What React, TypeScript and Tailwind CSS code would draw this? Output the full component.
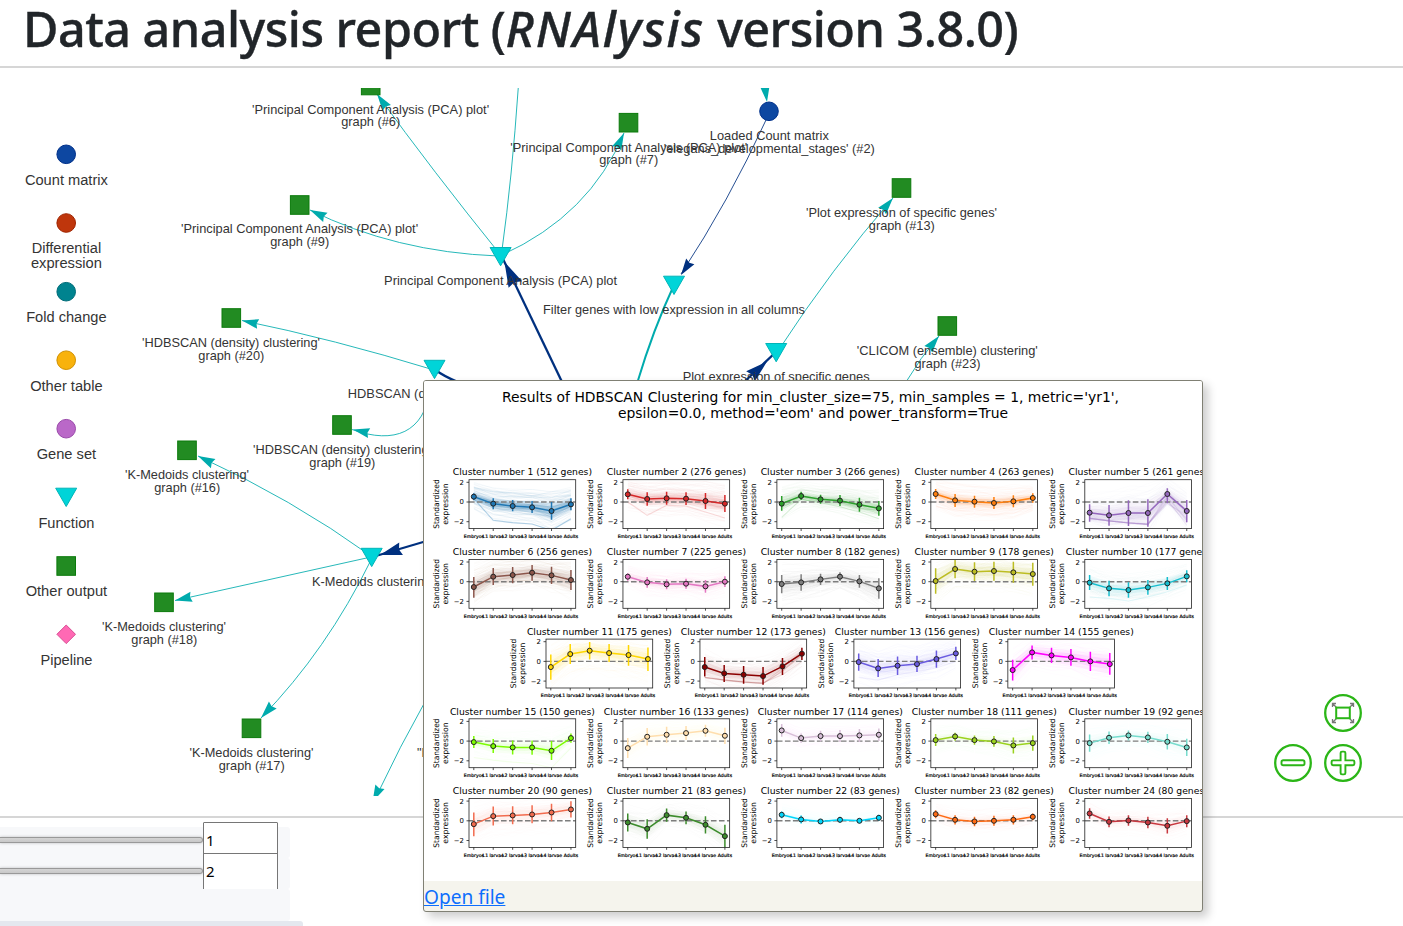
import React from 'react';

const TEAL = '#00abad';
const NAVY = '#00307f';

type Point = [number, number];

const edges: { d: string; color: string; w: number }[] = [
  { d: 'M500.6 255 Q432 170 377 94', color: TEAL, w: 1 },
  { d: 'M502 250 Q512 178 518.4 86', color: TEAL, w: 1 },
  { d: 'M498 256 Q395 252 310 210', color: TEAL, w: 1 },
  { d: 'M502 255 Q590 215 624 133', color: TEAL, w: 1 },
  { d: 'M766 120 Q729 201 681 274', color: NAVY, w: 1 },
  { d: 'M674 285 Q653 330 637.5 382', color: TEAL, w: 2 },
  { d: 'M503 259 L563 384', color: NAVY, w: 2.3 },
  { d: 'M778 351 Q832 268 893 198', color: TEAL, w: 1 },
  { d: 'M776 352 L742 384', color: NAVY, w: 2.3 },
  { d: 'M906 382 Q920 358 939 336', color: TEAL, w: 1 },
  { d: 'M434 370 Q333 339 242 320.5', color: TEAL, w: 1 },
  { d: 'M430 390 C424 432 395 445 352 429.5', color: TEAL, w: 1 },
  { d: 'M371 556 Q292 499 198 456', color: TEAL, w: 1 },
  { d: 'M371 557 L175 600.5', color: TEAL, w: 1 },
  { d: 'M371 560 Q327 650 261 718', color: TEAL, w: 1 },
  { d: 'M426 700 Q400 746 376 797', color: TEAL, w: 1 },
  { d: 'M430 540 L374 556.5', color: NAVY, w: 2.3 },
  { d: 'M434 369 Q445 377 458 382', color: NAVY, w: 2.3 },
];

const arrows: { tip: Point; from: Point; len: number; color: string }[] = [
  { tip: [377, 94], from: [400, 126.7], len: 17, color: TEAL },
  { tip: [310, 210], from: [350, 229], len: 17, color: TEAL },
  { tip: [624, 133], from: [614, 154], len: 17, color: TEAL },
  { tip: [681, 275], from: [698, 250], len: 16.5, color: NAVY },
  { tip: [767, 102], from: [764, 80], len: 17, color: TEAL },
  { tip: [504.5, 262], from: [518, 290], len: 25, color: NAVY },
  { tip: [893, 198], from: [868, 228], len: 17, color: TEAL },
  { tip: [767, 361.5], from: [744, 382], len: 22, color: NAVY },
  { tip: [939, 336], from: [922, 357], len: 17, color: TEAL },
  { tip: [242, 320.5], from: [300, 333], len: 16.5, color: TEAL },
  { tip: [353, 429.5], from: [375, 434.5], len: 16.5, color: TEAL },
  { tip: [198, 456], from: [246, 480], len: 17, color: TEAL },
  { tip: [175, 600.5], from: [230, 588], len: 17, color: TEAL },
  { tip: [261, 718], from: [282, 695], len: 17.5, color: TEAL },
  { tip: [372.5, 802], from: [393, 760], len: 17, color: TEAL },
  { tip: [380, 555], from: [424, 542], len: 22, color: NAVY },
];

const squares: Point[] = [
  [370.7, 85.5], [299.7, 205], [628.5, 122.7], [901.5, 188], [947.3, 326],
  [231.3, 318], [342, 425], [187, 450.3], [164, 602.3], [251.5, 728.3], [66.2, 566],
];

const triangles: Point[] = [
  [500.6, 247.5], [674, 276.2], [776.2, 343.5], [434.5, 360.3], [371.7, 548.3], [66.2, 488.2],
];

const circles: { x: number; y: number; fill: string; stroke: string }[] = [
  { x: 769, y: 111.3, fill: '#0d47a1', stroke: '#00308a' },
  { x: 66.2, y: 154.3, fill: '#0d47a1', stroke: '#00308a' },
  { x: 66.2, y: 223, fill: '#bf360c', stroke: '#a02400' },
  { x: 66.2, y: 291.7, fill: '#00838f', stroke: '#006c78' },
  { x: 66.2, y: 360.2, fill: '#f8b20c', stroke: '#d09000' },
  { x: 66.2, y: 428.7, fill: '#ba68c8', stroke: '#9a4aaa' },
];

const labels: { t: string; x: number; y: number; w?: number }[] = [
  { t: "'Principal Component Analysis (PCA) plot'", x: 370.6, y: 114, w: 237 },
  { t: 'graph (#6)', x: 370.7, y: 126, w: 59 },
  { t: "'Principal Component Analysis (PCA) plot'", x: 299.6, y: 233, w: 237 },
  { t: 'graph (#9)', x: 299.7, y: 246, w: 59 },
  { t: "'Principal Component Analysis (PCA) plot'", x: 628.8, y: 152, w: 237 },
  { t: 'graph (#7)', x: 628.7, y: 164, w: 59 },
  { t: 'Loaded Count matrix', x: 769.3, y: 140, w: 119 },
  { t: "'elegans_developmental_stages' (#2)", x: 769.3, y: 153, w: 211 },
  { t: "'Plot expression of specific genes'", x: 901.5, y: 217, w: 191 },
  { t: 'graph (#13)', x: 901.8, y: 230, w: 66 },
  { t: "'CLICOM (ensemble) clustering'", x: 947.3, y: 355, w: 181 },
  { t: 'graph (#23)', x: 947.5, y: 368, w: 66 },
  { t: "'HDBSCAN (density) clustering'", x: 231, y: 347, w: 178 },
  { t: 'graph (#20)', x: 231.3, y: 360, w: 66 },
  { t: "'HDBSCAN (density) clustering'", x: 342, y: 454, w: 178 },
  { t: 'graph (#19)', x: 342.3, y: 467, w: 66 },
  { t: "'K-Medoids clustering'", x: 187, y: 479, w: 124 },
  { t: 'graph (#16)', x: 187.2, y: 492, w: 66 },
  { t: "'K-Medoids clustering'", x: 164, y: 631, w: 124 },
  { t: 'graph (#18)', x: 164.3, y: 644, w: 66 },
  { t: "'K-Medoids clustering'", x: 251.5, y: 757, w: 124 },
  { t: 'graph (#17)', x: 251.7, y: 770, w: 66 },
  { t: 'Principal Component Analysis (PCA) plot', x: 500.6, y: 285, w: 233 },
  { t: 'Filter genes with low expression in all columns', x: 674, y: 314, w: 262 },
  { t: 'Plot expression of specific genes', x: 776.2, y: 381, w: 187 },
  { t: 'HDBSCAN (density) clustering', x: 434.8, y: 398, w: 174 },
  { t: 'K-Medoids clustering', x: 371.7, y: 586, w: 119.5 },
  { t: '"Pipeline', x: 442, y: 757, w: 50 },
];

const legend: { t: string; y: number; w: number }[] = [
  { t: 'Count matrix', y: 185, w: 83 },
  { t: 'Differential', y: 253.3, w: 69.5 },
  { t: 'expression', y: 268.3, w: 71 },
  { t: 'Fold change', y: 322, w: 80.5 },
  { t: 'Other table', y: 391, w: 72.5 },
  { t: 'Gene set', y: 459, w: 59.5 },
  { t: 'Function', y: 528, w: 56 },
  { t: 'Other output', y: 596, w: 81.5 },
  { t: 'Pipeline', y: 665, w: 52 },
];

function Arrow({ tip, from, len, color }: { tip: Point; from: Point; len: number; color: string }) {
  const a = Math.atan2(tip[1] - from[1], tip[0] - from[0]);
  const at = (u: number, v: number) =>
    `${tip[0] + len * (u * Math.cos(a) - v * Math.sin(a))},${tip[1] + len * (u * Math.sin(a) + v * Math.cos(a))}`;
  return <polygon points={[at(0, 0), at(-1, 0.3), at(-0.9, 0), at(-1, -0.3)].join(' ')} fill={color} />;
}

function Graph() {
  return (
    <svg viewBox="0 88 1403 708" className="block h-[708px] w-[1403px]">
      {edges.map((e, i) => (
        <path key={i} d={e.d} stroke={e.color} strokeWidth={e.w} opacity={e.w === 1 ? 0.85 : 1} fill="none" />
      ))}
      {arrows.map((a, i) => (
        <Arrow key={i} {...a} />
      ))}
      {squares.map(([x, y], i) => (
        <rect key={i} x={x - 9.3} y={y - 9.3} width="18.6" height="18.6" fill="#228b22" stroke="#0a7a0a" />
      ))}
      {triangles.map(([x, y], i) => (
        <polygon key={i} points={`${x - 10.5},${y} ${x + 10.5},${y} ${x},${y + 18.3}`} fill="#00d4d8" stroke="#00b4b8" />
      ))}
      {circles.map((c, i) => (
        <circle key={i} cx={c.x} cy={c.y} r="9.3" fill={c.fill} stroke={c.stroke} />
      ))}
      <polygon points="66.2,625 75.5,634.3 66.2,643.6 56.9,634.3" fill="#ff69b4" stroke="#d84a92" />
      <g fill="#343434" textAnchor="middle" className="font-['Liberation_Sans',Arial,sans-serif] text-[12.8px]">
        {labels.map((l, i) => (
          <text key={i} x={l.x} y={l.y} textLength={l.w} lengthAdjust="spacingAndGlyphs">{l.t}</text>
        ))}
      </g>
      <g fill="#343434" textAnchor="middle" className="font-['Liberation_Sans',Arial,sans-serif] text-[14.7px]">
        {legend.map((l) => (
          <text key={l.t} x="66.4" y={l.y} textLength={l.w} lengthAdjust="spacingAndGlyphs">{l.t}</text>
        ))}
      </g>
    </svg>
  );
}

/* Each sample is [mean, upper end, lower end], in thirds of a pixel below the zero line. */
type Sample = [number, number, number];
interface Cluster {
  n: number;
  genes: number;
  color: string;
  ghost: number;
  s: Sample[];
  extra?: number[][];
}

const clusters: Cluster[] = [
  { n: 1, genes: 512, color: '#1f77b4', ghost: 2.4, s: [[-16, -26, -5], [5, -11, 22], [12, -6, 28], [16, -3, 33], [27, 0, 53], [7, -11, 25]], extra: [[-10, 55, 62, 66, 85, 50]] },
  { n: 2, genes: 276, color: '#d62728', ghost: 1.2, s: [[-23, -38, -8], [-9, -29, 11], [-11, -31, 8], [-10, -29, 9], [-3, -27, 21], [5, -21, 30]], extra: [[0, 40, 10, 12, 30, 48]] },
  { n: 3, genes: 266, color: '#2ca02c', ghost: 1.3, s: [[5, -18, 26], [-18, -31, -6], [-8, -22, 5], [-4, -21, 12], [8, -13, 29], [19, -3, 41]], extra: [[46, -8, 2, 14, 30, 50]] },
  { n: 4, genes: 263, color: '#ff7f0e', ghost: 1.2, s: [[-24, -39, -9], [-5, -24, 15], [-1, -19, 17], [3, -15, 21], [-2, -20, 16], [-12, -26, 2]] },
  { n: 5, genes: 261, color: '#9467bd', ghost: 1, s: [[32, 7, 59], [40, 9, 71], [33, -5, 72], [33, -8, 74], [-24, -41, 4], [27, -6, 61]], extra: [[48, 56, 62, 66, 5, 40], [49, 57, 63, 67, -12, 56], [49, 57, 63, 67, -2, 62], [48, 56, 62, 66, -20, 30], [49, 57, 63, 67, -8, 70], [49, 57, 63, 67, 0, 48], [49, 57, 63, 67, -15, 52]] },
  { n: 6, genes: 256, color: '#8c564b', ghost: 1.3, s: [[16, -14, 48], [-15, -41, 10], [-20, -44, 5], [-27, -50, -3], [-19, -45, 7], [-5, -35, 25]] },
  { n: 7, genes: 225, color: '#e377c2', ghost: 0.8, s: [[-15, -25, -3], [2, -14, 18], [8, -7, 23], [6, -9, 21], [14, -5, 33], [0, -16, 16]] },
  { n: 8, genes: 182, color: '#7f7f7f', ghost: 0.8, s: [[7, -20, 35], [2, -22, 27], [-7, -24, 10], [-15, -28, -2], [-1, -20, 18], [20, -10, 51]] },
  { n: 9, genes: 178, color: '#bcbd22', ghost: 1, s: [[-2, -40, 36], [-38, -65, -10], [-30, -58, -2], [-32, -60, -3], [-28, -60, 3], [-23, -57, 12]] },
  { n: 10, genes: 177, color: '#17becf', ghost: 0.9, s: [[3, -20, 25], [20, -3, 44], [25, 2, 48], [17, -5, 39], [5, -14, 25], [-16, -34, 2]], extra: [[46, 50, 58, 46, 30, 10]] },
  { n: 11, genes: 175, color: '#ffd700', ghost: 1, s: [[17, -21, 55], [-22, -52, 8], [-32, -58, -6], [-25, -52, 2], [-19, -49, 13], [-7, -42, 29]] },
  { n: 12, genes: 173, color: '#8b0000', ghost: 0.8, s: [[17, -13, 45], [36, 11, 62], [40, 14, 67], [44, 17, 70], [15, -10, 41], [-23, -41, -4]], extra: [[48, 56, 62, 66, 30, -20], [48, 56, 62, 66, 20, -30], [48, 55, 61, 64, 40, 0], [49, 57, 63, 67, 28, -24]] },
  { n: 13, genes: 156, color: '#6a5be0', ghost: 0.7, s: [[2, -24, 28], [21, -7, 47], [13, -15, 41], [8, -17, 32], [-7, -33, 19], [-24, -44, -4]], extra: [[48, 56, 40, 30, 20, 0]] },
  { n: 14, genes: 155, color: '#ff00ff', ghost: 0.9, s: [[26, -5, 57], [-27, -48, -6], [-18, -41, 5], [-12, -37, 13], [0, -29, 29], [8, -25, 40]] },
  { n: 15, genes: 150, color: '#7cfc00', ghost: 0.6, s: [[3, -15, 21], [15, -6, 36], [19, -2, 40], [19, -2, 41], [29, 0, 57], [-9, -23, 5]], extra: [[49, 57, 63, 67, 80, 20]] },
  { n: 16, genes: 133, color: '#ffdead', ghost: 0.5, s: [[21, -9, 51], [-13, -39, 13], [-19, -43, 5], [-24, -45, -3], [-31, -49, -13], [-16, -40, 9]] },
  { n: 17, genes: 114, color: '#d8bfd8', ghost: 0.5, s: [[-32, -51, -13], [-9, -23, 5], [-15, -31, 1], [-15, -33, 3], [-17, -36, 3], [-19, -38, 0]] },
  { n: 18, genes: 111, color: '#9ad21e', ghost: 0.5, s: [[-3, -21, 15], [-14, -25, -1], [-3, -17, 11], [1, -15, 17], [13, -11, 37], [6, -17, 29]] },
  { n: 19, genes: 92, color: '#76dccd', ghost: 0.5, s: [[6, -20, 32], [-10, -29, 9], [-17, -32, -2], [-11, -28, 6], [2, -21, 25], [19, -7, 45]] },
  { n: 20, genes: 90, color: '#f26b4e', ghost: 0.5, s: [[10, -25, 46], [-14, -43, 14], [-16, -44, 10], [-19, -47, 7], [-25, -51, 1], [-34, -59, -10]] },
  { n: 21, genes: 83, color: '#3c8c2c', ghost: 0.5, s: [[5, -22, 32], [24, -5, 54], [-17, -37, 3], [-9, -28, 10], [12, -14, 38], [46, 12, 80]] },
  { n: 22, genes: 83, color: '#00d5fb', ghost: 0.4, s: [[-18, -28, -8], [-4, -16, 8], [2, -4, 8], [-3, -12, 6], [0, -7, 7], [-9, -18, 0]] },
  { n: 23, genes: 82, color: '#ff6a13', ghost: 0.4, s: [[-20, -32, -8], [-3, -17, 11], [2, -12, 16], [0, -15, 15], [-3, -17, 11], [-12, -22, -2]] },
  { n: 24, genes: 80, color: '#c8373f', ghost: 0.4, s: [[-22, -38, -6], [3, -13, 19], [-1, -17, 15], [5, -12, 22], [15, -8, 38], [1, -17, 19]] },
];

const stages = ['Embryos', 'L1 larvae', 'L2 larvae', 'L3 larvae', 'L4 larvae', 'Adults'];
const ROW_STARTS = [0, 5, 10, 14, 19];
const PITCH = 19.43;
const px = (i: number) => 4.8 + i * PITCH;

function random(seed: number) {
  let v = seed * 9301 + 49297;
  return () => {
    v = (v * 16807) % 2147483647;
    return v / 2147483647;
  };
}

function ghostLines(c: Cluster) {
  const rnd = random(c.n);
  return Array.from({ length: 90 }, () => {
    const shift = rnd() + rnd() - 1;
    return c.s
      .map(([m, hi, lo], i) => {
        const half = (lo - hi) / 2 + 12;
        return `${px(i)},${22.3 + (m + half * (shift * 1.7 + (rnd() - 0.5) * 0.6)) / 3}`;
      })
      .join(' ');
  });
}

function ClusterPlot({ c, x, y }: { c: Cluster; x: number; y: number }) {
  const line = c.s.map(([m], i) => `${px(i)},${22.3 + m / 3}`).join(' ');
  const band = (k: number) => [
    ...c.s.map(([m, hi], i) => `${px(i)},${22.3 + (m + (hi - m) * k) / 3}`),
    ...c.s.map(([m, , lo], i) => `${px(i)},${22.3 + (m + (lo - m) * k) / 3}`).reverse(),
  ].join(' ');
  const wide = c.n >= 10 && c.genes >= 100;
  return (
    <g transform={`translate(${x} ${y})`}>
      <text x="53.4" y="-4.3" textAnchor="middle" textLength={wide ? 145 : 139.3} lengthAdjust="spacingAndGlyphs" className="text-[9.4px]">
        {`Cluster number ${c.n} (${c.genes} genes)`}
      </text>
      <g clipPath="url(#axes)">
        <polygon points={band(0.9)} fill={c.color} opacity={0.06 * c.ghost} />
        <polygon points={band(0.5)} fill={c.color} opacity={0.09 * c.ghost} />
        {ghostLines(c).map((p, i) => (
          <polyline key={i} points={p} fill="none" stroke={c.color} strokeWidth="1" opacity={0.015 * c.ghost} />
        ))}
        {c.extra?.map((v, i) => (
          <polyline key={i} points={v.map((m, k) => `${px(k)},${22.3 + m / 3}`).join(' ')} fill="none" stroke={c.color} strokeWidth="1.1" opacity={0.14 * c.ghost} />
        ))}
        <path d="M0 22.3H106.7" stroke="#7d7d7d" strokeWidth="1.4" strokeDasharray="5.6 2.4" />
        <polyline points={line} fill="none" stroke={c.color} strokeWidth="1.5" />
        {c.s.map(([, hi, lo], i) => (
          <path key={i} d={`M${px(i)} ${22.3 + hi / 3}V${22.3 + lo / 3}`} stroke={c.color} strokeWidth="1.5" />
        ))}
        {c.s.map(([m], i) => (
          <circle key={i} cx={px(i)} cy={22.3 + m / 3} r="2.5" fill={c.color} stroke="#222" strokeWidth="1" />
        ))}
      </g>
      <rect x="0" y="0" width="106.7" height="48.9" fill="none" stroke="#222" strokeWidth="0.8" />
      <path d="M-2.5 2.6H0M-2.5 22.3H0M-2.5 42H0" stroke="#222" strokeWidth="0.8" />
      <g textAnchor="end" className="text-[6.9px]">
        <text x="-5" y="5.1">2</text>
        <text x="-5" y="24.8">0</text>
        <text x="-5" y="44.5">−2</text>
      </g>
      <g textAnchor="middle" className="text-[7.7px]">
        <text transform="translate(-30 24.4) rotate(-90)" textLength="49.5" lengthAdjust="spacingAndGlyphs">Standardized</text>
        <text transform="translate(-21 24.4) rotate(-90)" textLength="41.5" lengthAdjust="spacingAndGlyphs">expression</text>
      </g>
      {stages.map((t, i) => (
        <g key={t}>
          <path d={`M${px(i)} 48.9v2.4`} stroke="#222" strokeWidth="0.8" />
          <text x={px(i)} y="58.2" textAnchor="middle" stroke="#000" strokeWidth="0.2" className="text-[4.6px]">{t}</text>
        </g>
      ))}
    </g>
  );
}

function ClusterFigure() {
  return (
    <svg viewBox="424 381 778 500" className="block h-[500px] w-[778px] bg-white font-['DejaVu_Sans',sans-serif]">
      <defs>
        <clipPath id="axes">
          <rect x="0" y="0" width="106.7" height="48.9" />
        </clipPath>
      </defs>
      <g textAnchor="middle" className="text-[13.4px]">
        <text x="810.5" y="402" textLength="617" lengthAdjust="spacingAndGlyphs">Results of HDBSCAN Clustering for min_cluster_size=75, min_samples = 1, metric='yr1',</text>
        <text x="813" y="418" textLength="390" lengthAdjust="spacingAndGlyphs">epsilon=0.0, method='eom' and power_transform=True</text>
      </g>
      {clusters.map((c, i) => {
        const row = ROW_STARTS.filter((s) => s <= i).length - 1;
        const x = (row === 2 ? 546 : 469) + (i - ROW_STARTS[row]) * 153.95;
        return <ClusterPlot key={c.n} c={c} x={x} y={479.7 + row * 79.7} />;
      })}
    </svg>
  );
}

function FilePopup() {
  return (
    <div className="absolute left-[423px] top-[380px] flex h-[532px] w-[780px] flex-col overflow-hidden rounded-[3px] border border-[#808074] bg-[#f5f4ed] shadow-[5px_5px_10px_rgba(0,0,0,0.2)]">
      <ClusterFigure />
      <a href="#file" className="mt-[2px] self-start text-[19.1px] leading-7 text-[#0d6efd] underline">Open file</a>
    </div>
  );
}

function ZoomButton({ label, children }: { label: string; children: React.ReactNode }) {
  return (
    <button aria-label={label} className="h-10 w-10">
      <svg viewBox="0 0 40 40" fill="none" className="h-10 w-10">
        <circle cx="20" cy="20" r="17.8" stroke="#2bb617" strokeWidth="2.3" />
        {children}
      </svg>
    </button>
  );
}

function ZoomControls() {
  return (
    <div className="absolute left-[1273px] top-[693px] grid grid-cols-2 gap-[10px]">
      <span />
      <ZoomButton label="Zoom to fit">
        <path d="M9.5 14V10.5H13M9.5 10.5L13.5 14.5M27 10.5H30.5V14M30.5 10.5L26.5 14.5M9.5 26V29.5H13M9.5 29.5L13.5 25.5M27 29.5H30.5V26M30.5 29.5L26.5 25.5" stroke="#777" strokeWidth="1.3" />
        <rect x="13.2" y="14.6" width="13.6" height="10.6" stroke="#2bb617" strokeWidth="2" />
      </ZoomButton>
      <ZoomButton label="Zoom out">
        <rect x="8.5" y="17.3" width="23" height="5" rx="1.8" stroke="#2bb617" strokeWidth="1.9" />
      </ZoomButton>
      <ZoomButton label="Zoom in">
        <path d="M19 8.6h2q1.4 0 1.4 1.4v7.4h7.6q1.4 0 1.4 1.4v2q0 1.4-1.4 1.4h-7.6v7.8q0 1.4-1.4 1.4h-2q-1.4 0-1.4-1.4v-7.8h-7.6q-1.4 0-1.4-1.4v-2q0-1.4 1.4-1.4h7.6v-7.4q0-1.4 1.4-1.4z" stroke="#2bb617" strokeWidth="1.9" />
      </ZoomButton>
    </div>
  );
}

function Slider() {
  return <div className="mt-[10px] h-[6px] w-[203px] rounded-r-[3px] border border-l-0 border-[#999] bg-gradient-to-b from-[#d4d4d4] to-[#c8c8c8] shadow-[0_0_3px_rgba(0,0,0,0.25)]" />;
}

function ConfigPanel() {
  return (
    <div className="flex flex-col pt-[9px] text-[15px] text-black">
      <div className="flex h-[31px] w-[290px] items-start rounded-r-[3px] bg-[#f7f8fa]">
        <Slider />
        <div className="-mt-[5px] h-[32px] w-[75px] rounded-t-[1px] border border-[#767676] bg-white pl-[2px] pt-[5px] leading-6">1</div>
      </div>
      <div className="flex h-[31px] w-[290px] items-start rounded-r-[3px] bg-[#f7f8fa]">
        <Slider />
        <div className="-mt-[5px] h-[37px] w-[75px] border-x border-t border-[#767676] bg-white pl-[2px] pt-[5px] leading-6">2</div>
      </div>
      <div className="h-[32px] w-[290px] rounded-r-[3px] bg-[#f7f8fa]" />
      <div className="h-[10px] w-[303px] rounded-r-[3px] bg-[#e4e8ef]" />
    </div>
  );
}

export default function App() {
  return (
    <div className="relative flex h-[926px] w-[1403px] flex-col overflow-hidden bg-white font-['Noto_Sans','Open_Sans',sans-serif]">
      <header className="h-[68px] shrink-0 border-b-2 border-[#d6d6d6] pl-[23px]">
        <h1 className="whitespace-nowrap text-[48.5px] font-medium leading-[56px] tracking-[-0.5px] text-[#212529] [-webkit-text-stroke:0.4px_#212529]">
          Data analysis report (<em className="tracking-[1.9px]">RNAlysis</em> version 3.8.0)
        </h1>
      </header>
      <main className="h-[748px] shrink-0 py-5">
        <Graph />
      </main>
      <section className="shrink-0 border-t-2 border-[#d6d6d6]">
        <ConfigPanel />
      </section>
      <ZoomControls />
      <FilePopup />
    </div>
  );
}
